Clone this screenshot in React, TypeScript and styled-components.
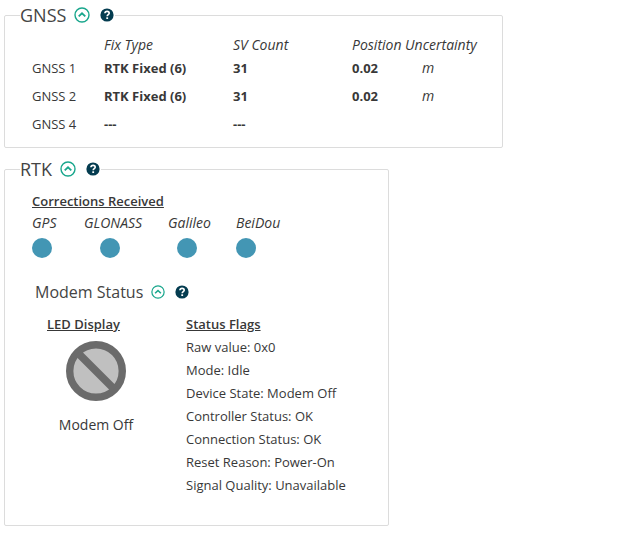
import React, { useState } from "react";
import styled, { createGlobalStyle } from "styled-components";

const GlobalStyle = createGlobalStyle`
  body {
    margin: 0;
    background: #fff;
    color: #383838;
    font-family: "Open Sans", "Noto Sans", sans-serif;
    font-size: 13px;
    line-height: 23px;
  }
`;

const Page = styled.main`
  display: flex;
  flex-direction: column;
  gap: 9px;
  padding: 3px 4px;
`;

const Panel = styled.fieldset<{ $max: number; $bottom: number }>`
  box-sizing: border-box;
  width: 100%;
  max-width: ${(p) => p.$max}px;
  min-width: 0;
  margin: 0;
  padding: 9px 15px ${(p) => p.$bottom}px 27px;
  border: 1px solid #dcdcdc;
  border-radius: 2px;
`;

const Legend = styled.legend`
  display: flex;
  align-items: center;
  height: 24px;
  margin-left: -12px;
  padding: 0 1px 0 0;
  color: #444;
  font-size: 18px;
  line-height: 24px;
`;

const SubHeading = styled.h3`
  display: flex;
  align-items: center;
  margin: 22px 0 9px 3px;
  color: #444;
  font-size: 16px;
  font-weight: 400;
  line-height: 24px;
`;

const IconButton = styled.button<{ $gap: number }>`
  display: flex;
  margin: 0 0 0 ${(p) => p.$gap}px;
  padding: 0;
  border: 0;
  background: none;
  cursor: pointer;
`;

const Table = styled.table`
  table-layout: fixed;
  width: 100%;
  max-width: 455px;
  border-collapse: collapse;
  text-align: left;

  th,
  td {
    padding: 0;
    line-height: 18px;
    white-space: nowrap;
  }
  thead th {
    height: 18px;
    font-size: 14px;
    font-style: italic;
    font-weight: 400;
  }
  tbody th {
    height: 28px;
    font-weight: 400;
  }
`;

const Col = styled.col<{ $width?: number }>`
  width: ${(p) => (p.$width ? `${p.$width}px` : "auto")};
`;

const Value = styled.td`
  font-weight: 700;
`;

const Unit = styled.td`
  font-size: 14px;
  font-style: italic;
`;

const Title = styled.h4`
  margin: 0;
  font-size: 13px;
  font-weight: 600;
  line-height: 23px;
  text-decoration: underline;
`;

const Systems = styled.ul`
  display: grid;
  grid-template-columns: 52px 84px 68px auto;
  justify-content: start;
  margin: 0;
  padding: 0;
  list-style: none;
`;

const System = styled.li`
  display: flex;
  flex-direction: column;
  gap: 5px;
  font-size: 14px;
  font-style: italic;
  line-height: 20px;
`;

const Dot = styled.span<{ $indent: number }>`
  width: 20px;
  height: 20px;
  margin-left: ${(p) => p.$indent}px;
  border-radius: 50%;
  background: #4396b4;
`;

const ModemColumns = styled.div`
  display: grid;
  grid-template-columns: 98px auto;
  justify-content: start;
  column-gap: 41px;
  padding-left: 15px;
`;

const Led = styled.div`
  display: flex;
  flex-direction: column;
  align-items: center;

  h4 {
    align-self: flex-start;
  }
  svg {
    margin: 5px 0 12px;
  }
`;

const LedLabel = styled.span`
  font-size: 14px;
  line-height: 24px;
`;

const Flags = styled.ul`
  margin: 0;
  padding: 0;
  list-style: none;
`;

function HeadingIcons({ name, open, onToggle, size, gap }: {
  name: string;
  open: boolean;
  onToggle: () => void;
  size: number;
  gap: number;
}) {
  return (
    <>
      <IconButton type="button" $gap={gap} aria-label={`Toggle ${name}`} aria-expanded={open} onClick={onToggle}>
        <svg width={size} height={size} viewBox="0 0 16 16" fill="none" stroke="#18a68c">
          <circle cx="8" cy="8" r="7" strokeWidth="1.4" />
          <path d={open ? "M4.7 9.4 8 6.3l3.3 3.1" : "M4.7 6.8 8 9.9l3.3-3.1"} strokeWidth="1.8" />
        </svg>
      </IconButton>
      <IconButton type="button" $gap={10} aria-label={`Help for ${name}`}>
        <svg width="14" height="14" viewBox="0 0 14 14">
          <circle cx="7" cy="7" r="6.6" fill="#043c50" />
          <path d="M4.9 5.3C5 4 5.9 3.4 7.1 3.4c1.2 0 2.1.7 2.1 1.8C9.2 6.6 7.2 6.7 7.2 8.3" fill="none" stroke="#fff" strokeWidth="1.6" />
          <rect x="6.3" y="9.3" width="1.8" height="1.7" fill="#fff" />
        </svg>
      </IconButton>
    </>
  );
}

const receivers = [
  { name: "GNSS 1", fix: "RTK Fixed (6)", count: "31", error: "0.02", unit: "m" },
  { name: "GNSS 2", fix: "RTK Fixed (6)", count: "31", error: "0.02", unit: "m" },
  { name: "GNSS 4", fix: "---", count: "---", error: "", unit: "" },
];

const systems = [
  { name: "GPS", indent: 0 },
  { name: "GLONASS", indent: 16 },
  { name: "Galileo", indent: 9 },
  { name: "BeiDou", indent: 0 },
];

const flags = [
  "Raw value: 0x0",
  "Mode: Idle",
  "Device State: Modem Off",
  "Controller Status: OK",
  "Connection Status: OK",
  "Reset Reason: Power-On",
  "Signal Quality: Unavailable",
];

export default function App() {
  const [gnss, setGnss] = useState(true);
  const [rtk, setRtk] = useState(true);
  const [modem, setModem] = useState(true);

  return (
    <>
      <GlobalStyle />
      <Page>
        <Panel $max={499} $bottom={9}>
          <Legend>
            GNSS
            <HeadingIcons name="GNSS" open={gnss} onToggle={() => setGnss(!gnss)} size={16} gap={8} />
          </Legend>
          {gnss && (
            <Table>
              <colgroup>
                <Col $width={72} />
                <Col $width={129} />
                <Col $width={119} />
                <Col $width={70} />
                <Col />
              </colgroup>
              <thead>
                <tr>
                  <td />
                  <th scope="col">Fix Type</th>
                  <th scope="col">SV Count</th>
                  <th scope="col" colSpan={2}>Position Uncertainty</th>
                </tr>
              </thead>
              <tbody>
                {receivers.map((r) => (
                  <tr key={r.name}>
                    <th scope="row">{r.name}</th>
                    <Value>{r.fix}</Value>
                    <Value>{r.count}</Value>
                    <Value>{r.error}</Value>
                    <Unit>{r.unit}</Unit>
                  </tr>
                ))}
              </tbody>
            </Table>
          )}
        </Panel>

        <Panel $max={385} $bottom={28}>
          <Legend>
            RTK
            <HeadingIcons name="RTK" open={rtk} onToggle={() => setRtk(!rtk)} size={16} gap={8} />
          </Legend>
          {rtk && (
            <>
              <Title>Corrections Received</Title>
              <Systems>
                {systems.map((s) => (
                  <System key={s.name}>
                    {s.name}
                    <Dot $indent={s.indent} />
                  </System>
                ))}
              </Systems>
              <SubHeading>
                Modem Status
                <HeadingIcons name="Modem Status" open={modem} onToggle={() => setModem(!modem)} size={14} gap={8} />
              </SubHeading>
              {modem && (
                <ModemColumns>
                  <Led>
                    <Title>LED Display</Title>
                    <svg width="60" height="60" viewBox="0 0 60 60" role="img" aria-label="Modem off">
                      <circle cx="30" cy="30" r="26.3" fill="#c0c0c0" stroke="#6b6b6b" strokeWidth="7.4" />
                      <path d="M12 12 48 48" stroke="#6b6b6b" strokeWidth="7.6" />
                    </svg>
                    <LedLabel>Modem Off</LedLabel>
                  </Led>
                  <div>
                    <Title>Status Flags</Title>
                    <Flags>
                      {flags.map((f) => (
                        <li key={f}>{f}</li>
                      ))}
                    </Flags>
                  </div>
                </ModemColumns>
              )}
            </>
          )}
        </Panel>
      </Page>
    </>
  );
}
